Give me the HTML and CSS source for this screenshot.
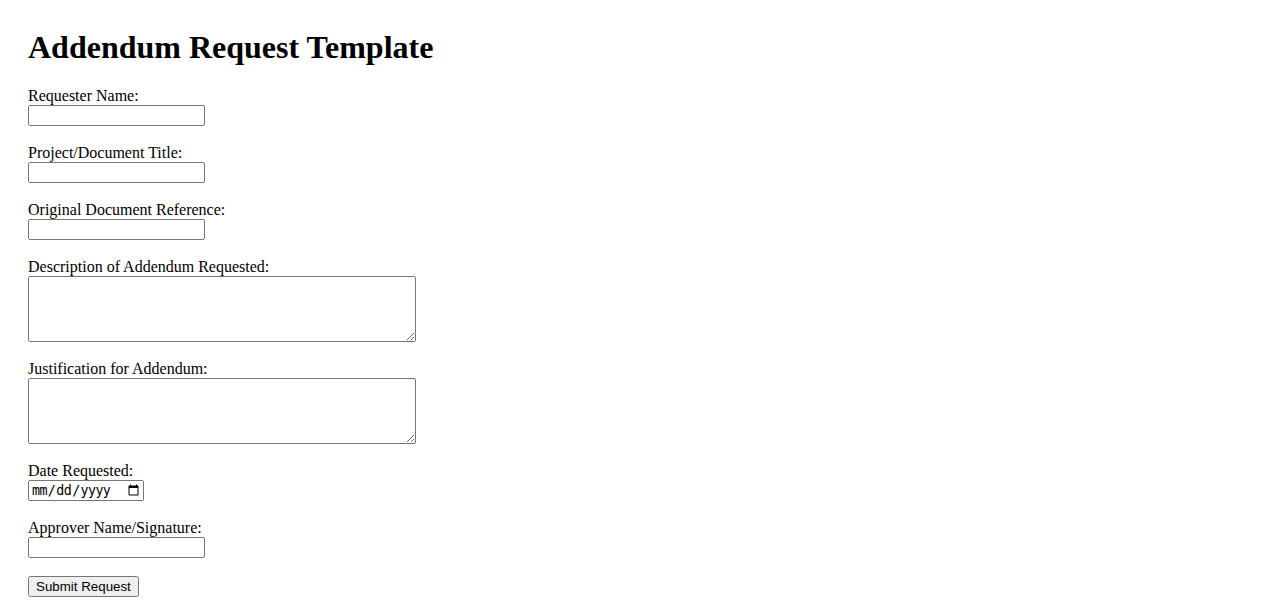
FILE: index.html
```html
<!DOCTYPE html>
<html>
<head>
<meta charset="utf-8">
<title>Addendum Request Template</title>
<link rel="stylesheet" href="styles.css">
</head>
<body>
<div class="page">
<h1 class="title">Addendum Request Template</h1>
<form class="form">
<label class="lbl" for="name">Requester Name:</label><br>
<input class="txt" type="text" id="name"><br><br>
<label class="lbl" for="title">Project/Document Title:</label><br>
<input class="txt" type="text" id="title"><br><br>
<label class="lbl" for="ref">Original Document Reference:</label><br>
<input class="txt" type="text" id="ref"><br><br>
<label class="lbl" for="desc">Description of Addendum Requested:</label><br>
<textarea class="area" id="desc" rows="4"></textarea><br><br>
<label class="lbl" for="just">Justification for Addendum:</label><br>
<textarea class="area" id="just" rows="4"></textarea><br><br>
<label class="lbl" for="date">Date Requested:</label><br>
<input class="date" type="date" id="date"><br><br>
<label class="lbl" for="appr">Approver Name/Signature:</label><br>
<input class="txt" type="text" id="appr"><br><br>
<input class="btn" type="submit" value="Submit Request">
</form>
</div>
</body>
</html>
```
FILE: styles.css
```css
body {
  margin: 8px;
  font-family: "Liberation Serif", "Times New Roman", serif;
  font-size: 16px;
  color: #000;
  background: #fff;
}
.page {
  padding: 0 20px;
}
.title {
  font-size: 32px;
  font-weight: bold;
  margin: 21px 0 21px;
}
.txt {
  width: 177px;
  box-sizing: border-box;
}
.area {
  width: 388px;
  box-sizing: border-box;
  vertical-align: top;
}
.date {
  width: 116px;
  box-sizing: border-box;
  letter-spacing: -0.6px;
}
.btn {
  font-family: "Liberation Sans", Arial, sans-serif;
}
```
